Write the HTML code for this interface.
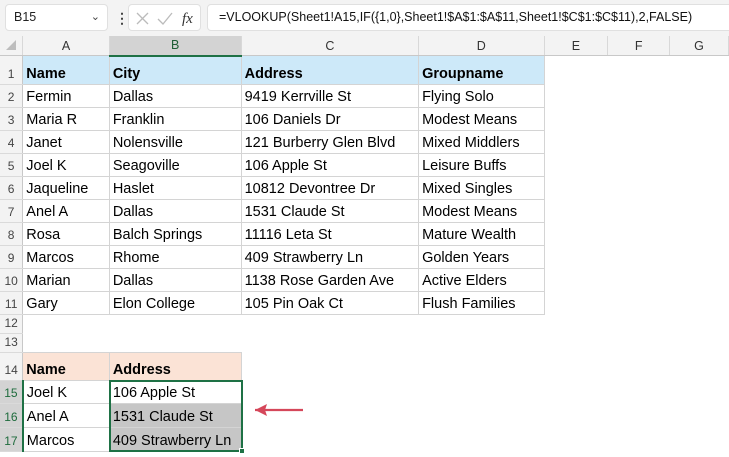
<!DOCTYPE html>
<html><head><meta charset="utf-8"><style>
*{margin:0;padding:0;box-sizing:border-box}
body{width:729px;height:457px;overflow:hidden;background:#fff;font-family:"Liberation Sans",Arial,sans-serif;position:relative}
.top{position:absolute;left:0;top:0;width:729px;height:36px;background:#f3f3f3}
.nb{position:absolute;left:5px;top:4px;width:103px;height:27px;background:#fff;border:1px solid #e0e0e0;border-radius:4px;font-size:12.5px;line-height:25px;padding-left:8px;color:#222}
.fx{position:absolute;left:128px;top:4px;width:73px;height:27px;background:#fff;border:1px solid #e0e0e0;border-radius:4px}
.fb{position:absolute;left:207px;top:4px;width:530px;height:27px;background:#fff;border:1px solid #e0e0e0;border-radius:4px;font-size:12.5px;line-height:25px;padding-left:11px;color:#111;white-space:nowrap}
table{position:absolute;left:0;top:36px;border-collapse:collapse;table-layout:fixed}
td{font-size:14.5px;color:#000;padding:0 0 0 3px;white-space:nowrap;overflow:hidden;vertical-align:bottom;padding-bottom:2px}
td.rh{background:#f3f3f3;color:#444;font-size:12px;text-align:center;padding:0;padding-bottom:3px;border-bottom:1px solid #dadada;border-right:1px solid #c8c8c8}
tr.ch td{background:#f3f3f3;color:#333;font-size:12.5px;text-align:center;padding:0;vertical-align:middle;border-right:1px solid #d8d8d8;border-bottom:1px solid #c8c8c8}
tr.ch td.sel{background:#d3d3d3;border-bottom:2px solid #1e7145;color:#1e5e35}
.g{border:1px solid #d4d4d4}
.b{font-weight:bold}
.bl{background:#cde9f9}
.pk{background:#fbe3d6}
.gr{background:#c6c6c6}
td.rs{background:#d3d3d3;color:#1e6b3c;border-right:2px solid #1e7145}
</style></head><body>
<div class="top"></div>
<div class="nb">B15<span style="position:absolute;right:7px;top:0;font-size:11px;color:#444">&#8964;</span></div>
<div style="position:absolute;left:115px;top:10px;font-size:14px;color:#444;font-weight:bold">&#8942;</div>
<div class="fx">
<svg width="73" height="27" style="position:absolute;left:0;top:0"><path d="M8 8 L19 19 M19 8 L8 19" stroke="#bbb" stroke-width="1.3" fill="none"/><path d="M29 14 L34 19 L43 8" stroke="#bbb" stroke-width="1.3" fill="none"/><text x="53" y="18" font-family="Liberation Serif" font-style="italic" font-size="15" fill="#333">fx</text></svg>
</div>
<div class="fb">=VLOOKUP(Sheet1!A15,IF({1,0},Sheet1!$A$1:$A$11,Sheet1!$C$1:$C$11),2,FALSE)</div>
<table>
<colgroup><col style="width:23px"><col style="width:87px"><col style="width:132px"><col style="width:178px"><col style="width:126px"><col style="width:65px"><col style="width:63px"><col style="width:60px"></colgroup>
<tr class="ch" style="height:19px"><td style="background:#f3f3f3"><svg width="14" height="14" style="margin-top:2px"><path d="M12 2 L12 12 L2 12 Z" fill="#bdbdbd"/></svg></td><td>A</td><td class="sel">B</td><td>C</td><td>D</td><td>E</td><td>F</td><td>G</td></tr>
<tr style="height:29px"><td class="rh">1</td><td class="g b bl">Name</td><td class="g b bl">City</td><td class="g b bl">Address</td><td class="g b bl">Groupname</td><td></td><td></td><td></td></tr>
<tr style="height:23px"><td class="rh">2</td><td class="g">Fermin</td><td class="g">Dallas</td><td class="g">9419 Kerrville St</td><td class="g">Flying Solo</td><td></td><td></td><td></td></tr>
<tr style="height:23px"><td class="rh">3</td><td class="g">Maria R</td><td class="g">Franklin</td><td class="g">106 Daniels Dr</td><td class="g">Modest Means</td><td></td><td></td><td></td></tr>
<tr style="height:23px"><td class="rh">4</td><td class="g">Janet</td><td class="g">Nolensville</td><td class="g">121 Burberry Glen Blvd</td><td class="g">Mixed Middlers</td><td></td><td></td><td></td></tr>
<tr style="height:23px"><td class="rh">5</td><td class="g">Joel K</td><td class="g">Seagoville</td><td class="g">106 Apple St</td><td class="g">Leisure Buffs</td><td></td><td></td><td></td></tr>
<tr style="height:23px"><td class="rh">6</td><td class="g">Jaqueline</td><td class="g">Haslet</td><td class="g">10812 Devontree Dr</td><td class="g">Mixed Singles</td><td></td><td></td><td></td></tr>
<tr style="height:23px"><td class="rh">7</td><td class="g">Anel A</td><td class="g">Dallas</td><td class="g">1531 Claude St</td><td class="g">Modest Means</td><td></td><td></td><td></td></tr>
<tr style="height:23px"><td class="rh">8</td><td class="g">Rosa</td><td class="g">Balch Springs</td><td class="g">11116 Leta St</td><td class="g">Mature Wealth</td><td></td><td></td><td></td></tr>
<tr style="height:23px"><td class="rh">9</td><td class="g">Marcos</td><td class="g">Rhome</td><td class="g">409 Strawberry Ln</td><td class="g">Golden Years</td><td></td><td></td><td></td></tr>
<tr style="height:23px"><td class="rh">10</td><td class="g">Marian</td><td class="g">Dallas</td><td class="g">1138 Rose Garden Ave</td><td class="g">Active Elders</td><td></td><td></td><td></td></tr>
<tr style="height:23px"><td class="rh">11</td><td class="g">Gary</td><td class="g">Elon College</td><td class="g">105 Pin Oak Ct</td><td class="g">Flush Families</td><td></td><td></td><td></td></tr>
<tr style="height:19px"><td class="rh">12</td><td></td><td></td><td></td><td></td><td></td><td></td><td></td></tr>
<tr style="height:19px"><td class="rh">13</td><td></td><td></td><td></td><td></td><td></td><td></td><td></td></tr>
<tr style="height:28px"><td class="rh">14</td><td class="g b pk">Name</td><td class="g b pk">Address</td><td></td><td></td><td></td><td></td><td></td></tr>
<tr style="height:23px"><td class="rh rs">15</td><td class="g">Joel K</td><td class="g">106 Apple St</td><td></td><td></td><td></td><td></td><td></td></tr>
<tr style="height:24px"><td class="rh rs">16</td><td class="g">Anel A</td><td class="g gr">1531 Claude St</td><td></td><td></td><td></td><td></td><td></td></tr>
<tr style="height:24px"><td class="rh rs">17</td><td class="g">Marcos</td><td class="g gr">409 Strawberry Ln</td><td></td><td></td><td></td><td></td><td></td></tr>
</table>
<div style="position:absolute;left:109px;top:380px;width:134px;height:72px;border:2px solid #1e7145"></div>
<div style="position:absolute;left:239px;top:448px;width:6px;height:6px;background:#1e7145;border:1px solid #fff"></div>
<svg width="60" height="20" style="position:absolute;left:250px;top:400px"><path d="M5 10 L53 10" stroke="#d5475a" stroke-width="2.2"/><path d="M5 10 L17 4 L15 10 L17 16 Z" fill="#d5475a"/></svg>
</body></html>
